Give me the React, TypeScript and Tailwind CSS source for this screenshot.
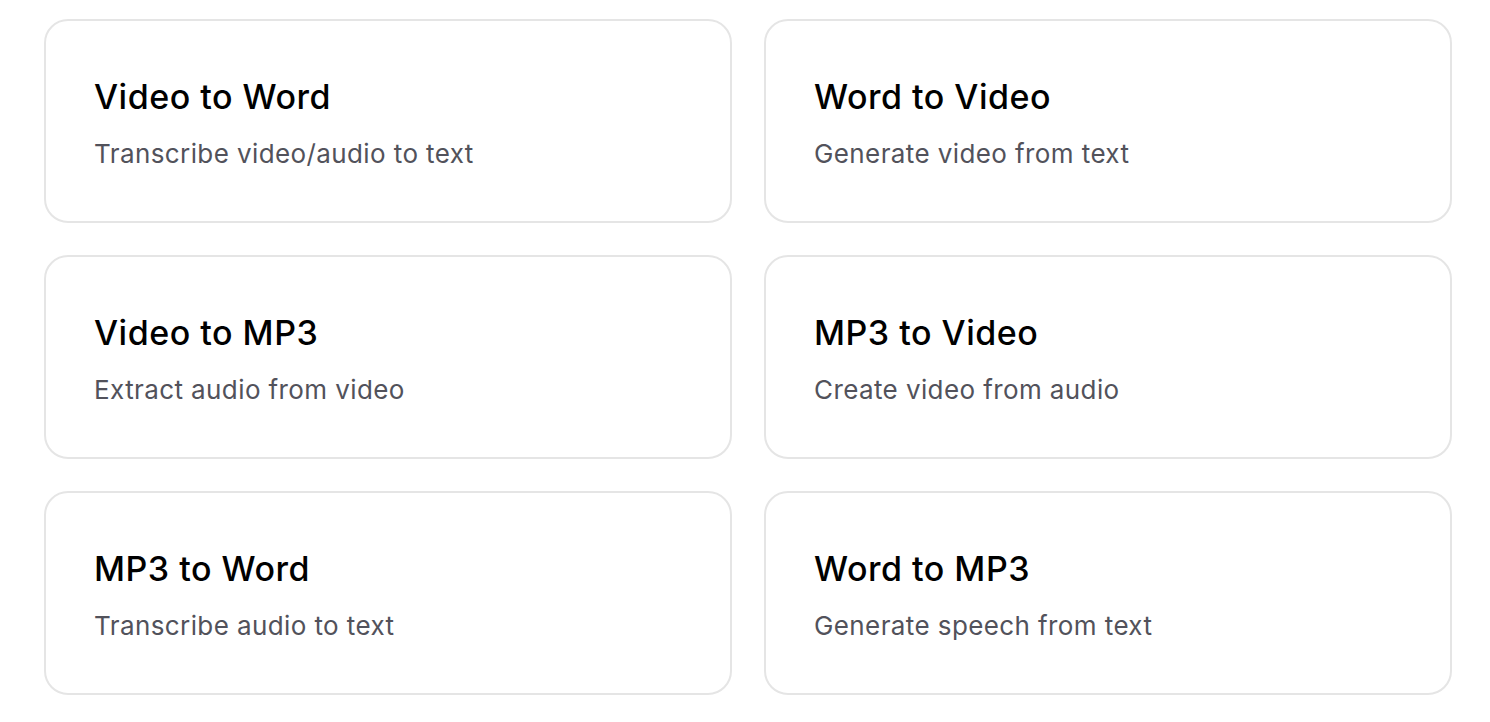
const tools = [
  { title: 'Video to Word', desc: 'Transcribe video/audio to text' },
  { title: 'Word to Video', desc: 'Generate video from text' },
  { title: 'Video to MP3', desc: 'Extract audio from video' },
  { title: 'MP3 to Video', desc: 'Create video from audio' },
  { title: 'MP3 to Word', desc: 'Transcribe audio to text' },
  { title: 'Word to MP3', desc: 'Generate speech from text' },
]

export default function App() {
  return (
    <div className="min-h-screen bg-white pt-[19px] pl-[44px] font-['Inter',sans-serif]">
      <div className="grid grid-cols-[688px_688px] gap-[32px]">
        {tools.map((tool) => (
          <button
            key={tool.title}
            className="flex h-[204px] flex-col items-start justify-start rounded-[24px] border-2 border-[#e5e5e5] bg-white pl-[48px] pt-[56px] text-left"
          >
            <h3 className="text-[34px] leading-[40px] font-medium tracking-[0.5px] text-black">{tool.title}</h3>
            <p className="mt-[21px] text-[26px] leading-[32px] tracking-[0.4px] text-[#52525b]">{tool.desc}</p>
          </button>
        ))}
      </div>
    </div>
  )
}
